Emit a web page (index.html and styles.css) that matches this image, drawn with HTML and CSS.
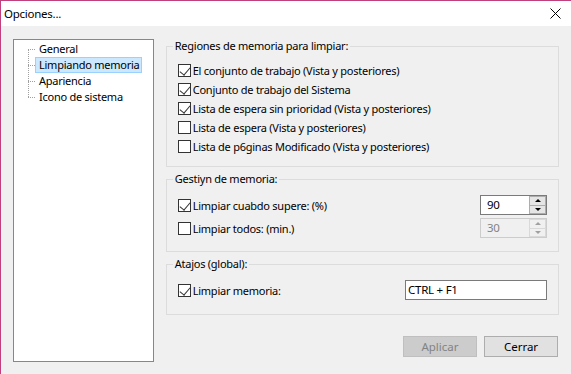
FILE: index.html
```html
<!DOCTYPE html>
<html lang="es">
<head>
  <meta charset="UTF-8">
  <meta name="viewport" content="width=device-width, initial-scale=1.0">
  <title>Opciones...</title>
  <link rel="stylesheet" href="styles.css">
</head>
<body>
  <div class="window">
    <header class="titlebar">
      <span class="titlebar__text">Opciones...</span>
      <svg class="titlebar__close" width="11" height="11" viewBox="0 0 11 11">
        <path d="M0.5 0.5 L10.5 10.5 M10.5 0.5 L0.5 10.5" stroke="#000" stroke-width="1" fill="none"/>
      </svg>
    </header>
    <div class="content">
      <nav class="tree">
        <ul class="tree__list">
          <li class="tree__item"><span class="tree__dash"></span><span class="tree__label">General</span></li>
          <li class="tree__item"><span class="tree__dash"></span><span class="tree__label tree__label--active">Limpiando memoria</span></li>
          <li class="tree__item"><span class="tree__dash"></span><span class="tree__label">Apariencia</span></li>
          <li class="tree__item"><span class="tree__dash"></span><span class="tree__label">Icono de sistema</span></li>
        </ul>
      </nav>
      <section class="panel">
        <fieldset class="group group--regions">
          <legend class="group__title">Regiones de memoria para limpiar:</legend>
          <label class="check"><span class="check__box is-checked"></span>El conjunto de trabajo (Vista y posteriores)</label>
          <label class="check"><span class="check__box is-checked"></span>Conjunto de trabajo del Sistema</label>
          <label class="check"><span class="check__box is-checked"></span>Lista de espera sin prioridad (Vista y posteriores)</label>
          <label class="check"><span class="check__box"></span>Lista de espera (Vista y posteriores)</label>
          <label class="check"><span class="check__box"></span>Lista de p6ginas Modificado (Vista y posteriores)</label>
        </fieldset>
        <fieldset class="group group--manage">
          <legend class="group__title">Gestiyn de memoria:</legend>
          <div class="row">
            <label class="check"><span class="check__box is-checked"></span>Limpiar cuabdo supere: (%)</label>
            <div class="spin">
              <span class="spin__value">90</span>
              <span class="spin__buttons">
                <span class="spin__btn"><i class="arrow arrow--up"></i></span>
                <span class="spin__btn"><i class="arrow arrow--down"></i></span>
              </span>
            </div>
          </div>
          <div class="row">
            <label class="check"><span class="check__box"></span>Limpiar todos: (min.)</label>
            <div class="spin spin--disabled">
              <span class="spin__value">30</span>
              <span class="spin__buttons">
                <span class="spin__btn"><i class="arrow arrow--up"></i></span>
                <span class="spin__btn"><i class="arrow arrow--down"></i></span>
              </span>
            </div>
          </div>
        </fieldset>
        <fieldset class="group group--hotkeys">
          <legend class="group__title">Atajos (global):</legend>
          <div class="row">
            <label class="check"><span class="check__box is-checked"></span>Limpiar memoria:</label>
            <div class="hotkey">CTRL + F1</div>
          </div>
        </fieldset>
        <div class="actions">
          <button class="btn btn--disabled" type="button">Aplicar</button>
          <button class="btn" type="button">Cerrar</button>
        </div>
      </section>
    </div>
  </div>
</body>
</html>
```

FILE: styles.css
```css
* {
  margin: 0;
  padding: 0;
  box-sizing: border-box;
}

ul {
  list-style: none;
}

body {
  background: #f0f0f0;
  font-family: "Noto Sans", "DejaVu Sans", sans-serif;
  font-size: 11px;
  letter-spacing: -0.25px;
  color: #000;
  overflow: hidden;
}

.window {
  height: 100vh;
  border-left: 1px solid #c0407e;
  border-top: 1px solid #c0407e;
}

.titlebar {
  display: flex;
  align-items: center;
  justify-content: space-between;
  height: 25px;
  padding: 0 10px 0 3px;
  background: #fff;
}

.titlebar__text {
  font-size: 11.5px;
}

.content {
  display: flex;
  gap: 12px;
  padding: 13px 12px 0 12px;
}

/* tree */
.tree {
  width: 141px;
  height: 323px;
  background: #fff;
  border: 1px solid #828790;
  padding-top: 1px;
}

.tree__list {
  position: relative;
  margin-left: 14px;
}

.tree__list::before {
  content: "";
  position: absolute;
  left: 0;
  top: 8px;
  bottom: 8px;
  border-left: 1px dotted #a0a0a0;
}

.tree__item {
  display: flex;
  align-items: center;
  height: 16px;
}

.tree__dash {
  width: 7px;
  border-top: 1px dotted #a0a0a0;
}

.tree__label {
  height: 16px;
  line-height: 14px;
  padding: 0 2px 0 3px;
  border: 1px solid transparent;
  white-space: nowrap;
}

.tree__label--active {
  background: #cce8ff;
  border-color: #99d1ff;
}

/* right panel */
.panel {
  width: 394px;
  margin-top: -1px;
}

.group {
  border: 1px solid #dcdcdc;
  padding: 0 11px;
  margin-bottom: 4px;
}

.group__title {
  line-height: 16px;
  padding: 0 2px;
  margin-left: -5px;
}

.group--regions {
  padding-top: 7px;
  padding-bottom: 10px;
}

.group--manage {
  padding-top: 8px;
  padding-bottom: 13px;
}

.group--hotkeys {
  padding-top: 8px;
  padding-bottom: 14px;
}

.check {
  display: flex;
  align-items: center;
  height: 19px;
  gap: 2px;
  white-space: nowrap;
}

.check__box {
  position: relative;
  flex: none;
  width: 13px;
  height: 13px;
  border: 1px solid #333;
  background: #fff;
}

.check__box.is-checked::after {
  content: "";
  position: absolute;
  left: 3px;
  top: 0;
  width: 5px;
  height: 9px;
  border-right: 1px solid #333;
  border-bottom: 1px solid #333;
  transform: rotate(40deg);
}

.row {
  display: flex;
  align-items: center;
  justify-content: space-between;
  height: 20px;
}

.row + .row {
  margin-top: 3px;
}

.spin {
  display: flex;
  width: 67px;
  height: 20px;
  border: 1px solid #7a7a7a;
  background: #fff;
}

.spin__value {
  flex: 1;
  padding-left: 6px;
  line-height: 18px;
  font-size: 11.5px;
}

.spin__buttons {
  display: flex;
  flex-direction: column;
  width: 17px;
}

.spin__btn {
  flex: 1;
  display: flex;
  align-items: center;
  justify-content: center;
  background: #e5e5e5;
  border: 1px solid #adadad;
}

.spin__btn + .spin__btn {
  border-top: none;
}

.arrow {
  width: 0;
  height: 0;
  border-left: 3px solid transparent;
  border-right: 3px solid transparent;
}

.arrow--up {
  border-bottom: 3px solid #000;
}

.arrow--down {
  border-top: 3px solid #000;
}

.spin--disabled {
  border-color: #cccccc;
  background: #f0f0f0;
  color: #838383;
}

.spin--disabled .spin__btn {
  background: #f0f0f0;
  border-color: #d9d9d9;
}

.spin--disabled .arrow--up {
  border-bottom-color: #a0a0a0;
}

.spin--disabled .arrow--down {
  border-top-color: #a0a0a0;
}

.hotkey {
  width: 142px;
  height: 20px;
  border: 1px solid #7a7a7a;
  background: #fff;
  padding-left: 2px;
  line-height: 18px;
  font-size: 11.5px;
}

.actions {
  display: flex;
  justify-content: flex-end;
  gap: 7px;
  padding-right: 1px;
  margin-top: 21px;
}

.btn {
  width: 74px;
  height: 21px;
  font: inherit;
  font-size: 11.5px;
  background: #e1e1e1;
  border: 1px solid #adadad;
  color: #000;
}

.btn--disabled {
  background: #cccccc;
  border-color: #bfbfbf;
  color: #838383;
}
```
